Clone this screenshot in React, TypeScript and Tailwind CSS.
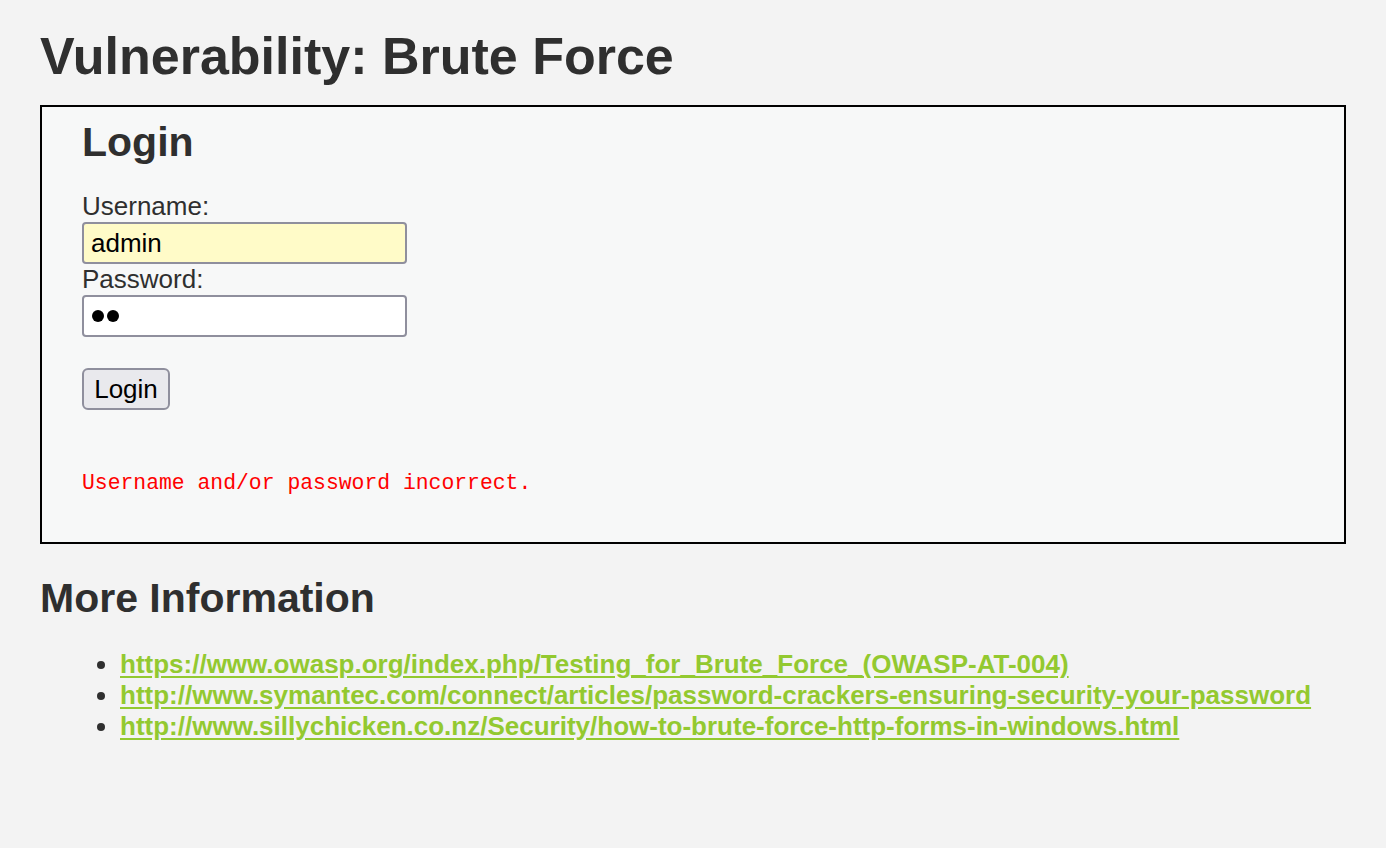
import React from "react";

export default function App() {
  const links = [
    "https://www.owasp.org/index.php/Testing_for_Brute_Force_(OWASP-AT-004)",
    "http://www.symantec.com/connect/articles/password-crackers-ensuring-security-your-password",
    "http://www.sillychicken.co.nz/Security/how-to-brute-force-http-forms-in-windows.html",
  ];
  return (
    <div
      className="min-h-[848px] w-full bg-[#f3f3f3] px-[40px] pt-[26px] text-[#2f2f2f]"
      style={{ fontFamily: '"Liberation Sans", Arial, sans-serif' }}
    >
      <h1 className="text-[52px] font-bold leading-[60px]">Vulnerability: Brute Force</h1>
      <div className="mt-[19px] w-[1306px] border-2 border-black bg-[#f7f8f8] pl-[40px] pt-[11px] pb-[46px]">
        <h2 className="text-[41px] font-bold leading-[48px]">Login</h2>
        <form className="mt-[25px]" onSubmit={(e) => e.preventDefault()}>
          <div className="text-[26px] leading-[31px]">Username:</div>
          <input
            type="text"
            defaultValue="admin"
            className="block h-[42px] w-[325px] rounded-[4px] border-2 border-[#8f8f9d] bg-[#fffbc8] px-[7px] text-[26px] text-black outline-none"
          />
          <div className="text-[26px] leading-[31px]">Password:</div>
          <div className="flex h-[42px] w-[325px] items-center gap-[3px] rounded-[4px] border-2 border-[#8f8f9d] bg-white px-[8px]">
            <span className="h-[12px] w-[12px] rounded-full bg-black" />
            <span className="h-[12px] w-[12px] rounded-full bg-black" />
          </div>
          <div className="h-[31px]" />
          <button
            type="submit"
            className="block h-[42px] w-[88px] rounded-[6px] border-2 border-[#8f8f9d] bg-[#e9e9ed] text-[26px] leading-[30px] text-black"
          >
            Login
          </button>
        </form>
        <pre
          className="mt-[60px] text-[21.4px] leading-[26px] text-[#ff0000]"
          style={{ fontFamily: '"Liberation Mono", "Courier New", monospace' }}
        >
          Username and/or password incorrect.
        </pre>
      </div>
      <h2 className="mt-[30px] text-[41px] font-bold leading-[48px]">More Information</h2>
      <ul className="mt-[27px] list-disc pl-[80px] marker:text-[#2f2f2f]">
        {links.map((l) => (
          <li key={l} className="text-[26px] leading-[31px]">
            <a href="#" className="font-bold text-[#93c930] underline underline-offset-[3px]">
              {l}
            </a>
          </li>
        ))}
      </ul>
    </div>
  );
}
